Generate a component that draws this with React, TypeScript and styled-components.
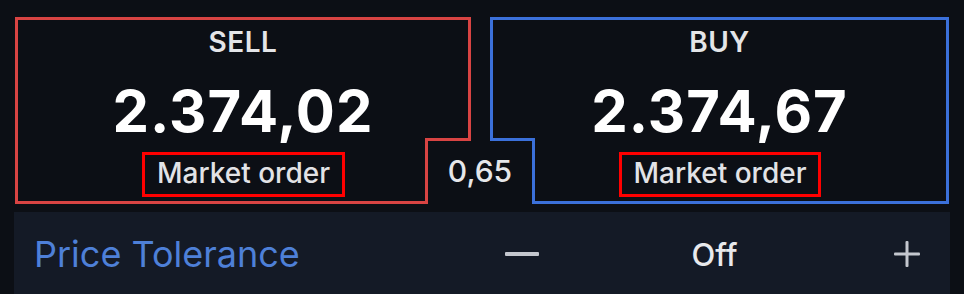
import styled, { createGlobalStyle, css } from "styled-components"

type Side = "sell" | "buy"

const SELL = "#d94443"
const BUY = "#3b70da"
const MARK = "#ff0000"

const sideColor = (side: Side) => (side === "sell" ? SELL : BUY)

const GlobalStyle = createGlobalStyle`
  html, body {
    margin: 0;
    background: #0c0f15;
    overflow: hidden;
  }
  * {
    box-sizing: border-box;
  }
  body {
    font-family: Inter, "Noto Sans", sans-serif;
    color: #e6e7ea;
  }
`

interface QuoteProps {
  side: Side
  label: string
  price: string
  orderType: string
}

const QuoteTop = ({ side, label, price }: Omit<QuoteProps, "orderType">) => (
  <SideTop $side={side}>
    <SideLabel>{label}</SideLabel>
    <Price>{price}</Price>
  </SideTop>
)

const QuoteBottom = ({ side, orderType }: Pick<QuoteProps, "side" | "orderType">) => (
  <SideBottom $side={side}>
    <OrderTag>{orderType}</OrderTag>
  </SideBottom>
)

export default function App() {
  return (
    <>
      <GlobalStyle />
      <Page>
        <Quotes>
          <QuoteTop side="sell" label="SELL" price="2.374,02" />
          <QuoteTop side="buy" label="BUY" price="2.374,67" />
          <QuoteBottom side="sell" orderType="Market order" />
          <Spread>0,65</Spread>
          <QuoteBottom side="buy" orderType="Market order" />
        </Quotes>

        <TolerancePanel>
          <ToleranceLabel>Price Tolerance</ToleranceLabel>
          <Stepper>
            <StepButton aria-label="decrease">
              <svg width="34" height="4" viewBox="0 0 34 4">
                <rect x="0" y="0" width="34" height="4" rx="1" fill="#c4c7ce" />
              </svg>
            </StepButton>
            <StepValue>Off</StepValue>
            <StepButton aria-label="increase">
              <svg width="26" height="26" viewBox="0 0 26 26">
                <rect x="0" y="11.5" width="26" height="3" rx="1" fill="#c4c7ce" />
                <rect x="11.5" y="0" width="3" height="26" rx="1" fill="#c4c7ce" />
              </svg>
            </StepButton>
          </Stepper>
        </TolerancePanel>
      </Page>
    </>
  )
}

const Page = styled.div`
  width: 964px;
  padding: 17px 14px 0 14px;
`

const Quotes = styled.div`
  display: grid;
  grid-template-columns: 410px 46px 19px 45px 414px;
  grid-template-rows: 121px 66px;
  margin: 0 1px;
`

const SideTop = styled.div<{ $side: Side }>`
  ${({ $side }) => css`
    grid-column: ${$side === "sell" ? "1 / 3" : "4 / 6"};
    grid-row: 1;
    border: 3px solid ${sideColor($side)};
    border-bottom: none;
    display: flex;
    flex-direction: column;
    align-items: center;
    padding-top: 8px;
  `}
`

const SideLabel = styled.div`
  font-size: 28px;
  line-height: 28px;
  font-weight: 600;
  letter-spacing: 0.5px;
  color: #e4e5e8;
`

const Price = styled.div`
  margin-top: 26px;
  font-size: 58px;
  line-height: 58px;
  font-weight: 700;
  letter-spacing: 1px;
  color: #ffffff;
`

const SideBottom = styled.div<{ $side: Side }>`
  ${({ $side }) => css`
    grid-column: ${$side === "sell" ? "1" : "5"};
    grid-row: 2;
    border-bottom: 3px solid ${sideColor($side)};
    ${$side === "sell"
      ? css`
          border-left: 3px solid ${SELL};
          padding-left: 44px;
        `
      : css`
          border-right: 3px solid ${BUY};
          padding-right: 41px;
        `}
    display: flex;
    justify-content: center;
    align-items: flex-start;
    padding-top: 14px;
  `}
`

const OrderTag = styled.div`
  height: 45px;
  border: 3px solid ${MARK};
  padding: 0 12px 3px;
  display: flex;
  align-items: center;
  font-size: 28px;
  line-height: 28px;
  font-weight: 500;
  color: #e2e3e6;
  white-space: nowrap;
`

const Spread = styled.div`
  grid-column: 2 / 5;
  grid-row: 2;
  border-left: 3px solid ${SELL};
  border-right: 3px solid ${BUY};
  background:
    linear-gradient(${SELL}, ${SELL}) left top / 43px 3px no-repeat,
    linear-gradient(${BUY}, ${BUY}) right top / 42px 3px no-repeat;
  display: flex;
  align-items: center;
  justify-content: center;
  font-size: 30px;
  line-height: 30px;
  font-weight: 500;
  color: #e6e7ea;
`

const TolerancePanel = styled.div`
  margin-top: 8px;
  height: 84px;
  background: #141a26;
  display: flex;
  align-items: center;
  padding: 0 18px 0 20px;
`

const ToleranceLabel = styled.div`
  flex: 1;
  font-size: 36px;
  line-height: 36px;
  font-weight: 400;
  color: #4e80d8;
`

const Stepper = styled.div`
  width: 435px;
  display: flex;
  align-items: center;
`

const StepButton = styled.button`
  width: 50px;
  height: 50px;
  padding: 0;
  border: none;
  background: transparent;
  display: flex;
  align-items: center;
  justify-content: center;
  cursor: pointer;
`

const StepValue = styled.div`
  flex: 1;
  text-align: center;
  font-size: 31px;
  line-height: 31px;
  font-weight: 500;
  color: #e8e9ec;
`
